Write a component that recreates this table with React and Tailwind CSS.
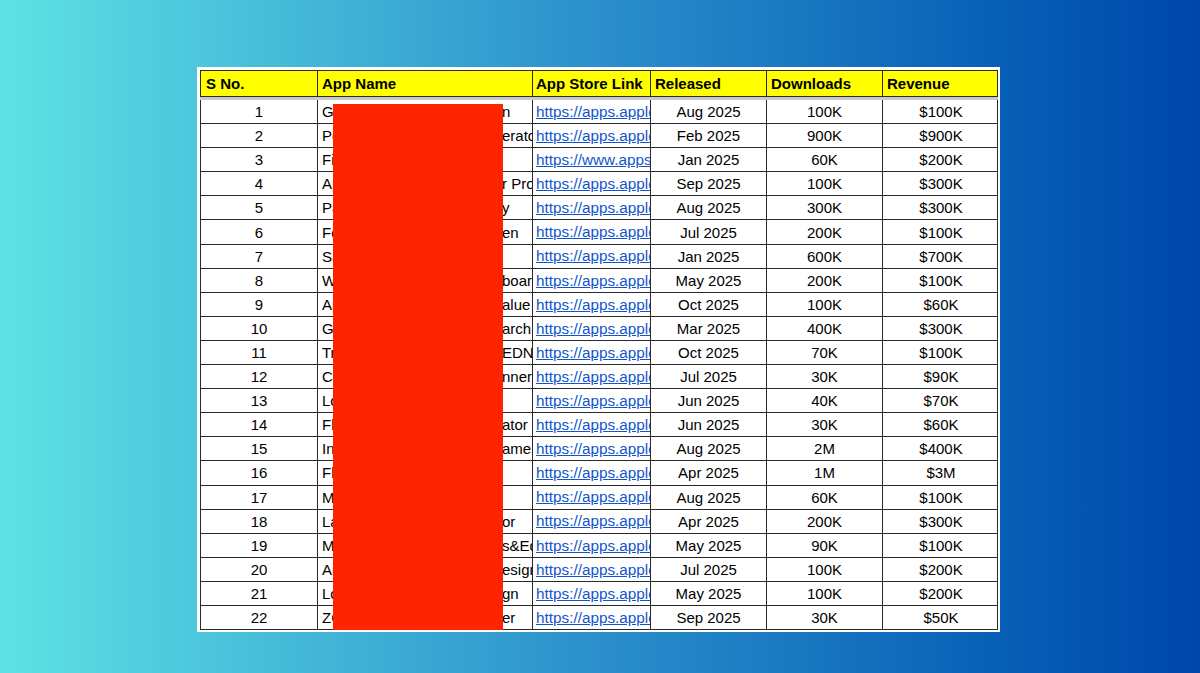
import React from "react";

const rows = [
  ["1", "Gr", "n", "https://apps.apple.com/app", "Aug 2025", "100K", "$100K"],
  ["2", "Po", "erato", "https://apps.apple.com/app", "Feb 2025", "900K", "$900K"],
  ["3", "Fi", "", "https://www.appstore.com/app", "Jan 2025", "60K", "$200K"],
  ["4", "Ap", "r Pro", "https://apps.apple.com/app", "Sep 2025", "100K", "$300K"],
  ["5", "Pa", "y", "https://apps.apple.com/app", "Aug 2025", "300K", "$300K"],
  ["6", "Fo", "en", "https://apps.apple.com/app", "Jul 2025", "200K", "$100K"],
  ["7", "Sa", "", "https://apps.apple.com/app", "Jan 2025", "600K", "$700K"],
  ["8", "Wo", "board", "https://apps.apple.com/app", "May 2025", "200K", "$100K"],
  ["9", "Ap", "alue", "https://apps.apple.com/app", "Oct 2025", "100K", "$60K"],
  ["10", "Go", "arch", "https://apps.apple.com/app", "Mar 2025", "400K", "$300K"],
  ["11", "Tr", "EDN", "https://apps.apple.com/app", "Oct 2025", "70K", "$100K"],
  ["12", "Co", "nner", "https://apps.apple.com/app", "Jul 2025", "30K", "$90K"],
  ["13", "Lo", "", "https://apps.apple.com/app", "Jun 2025", "40K", "$70K"],
  ["14", "Fl", "ator", "https://apps.apple.com/app", "Jun 2025", "30K", "$60K"],
  ["15", "In", "ames", "https://apps.apple.com/app", "Aug 2025", "2M", "$400K"],
  ["16", "Fl", "", "https://apps.apple.com/app", "Apr 2025", "1M", "$3M"],
  ["17", "Ma", "", "https://apps.apple.com/app", "Aug 2025", "60K", "$100K"],
  ["18", "La", "or", "https://apps.apple.com/app", "Apr 2025", "200K", "$300K"],
  ["19", "Mo", "s&Ed", "https://apps.apple.com/app", "May 2025", "90K", "$100K"],
  ["20", "Ai", "esign", "https://apps.apple.com/app", "Jul 2025", "100K", "$200K"],
  ["21", "Lo", "gn", "https://apps.apple.com/app", "May 2025", "100K", "$200K"],
  ["22", "ZC", "er", "https://apps.apple.com/app", "Sep 2025", "30K", "$50K"],
];

const cols = "grid grid-cols-[117px_215px_118px_116px_116px_116px]";

export default function App() {
  return (
    <div className="w-[1200px] h-[673px] overflow-hidden bg-linear-to-r from-[#5fe2e4] via-[#2b8fcb] to-[#0046ab] pt-[67px] pl-[197px] font-['Liberation_Sans',Arial,sans-serif] text-black">
      <div className="relative w-[803px] bg-white pt-[3px] pl-[3px] pr-[2px] pb-[2px]">
        <div className={`${cols} h-[27px] bg-[#ffff00] border border-[#2a2a2a] text-[15px] font-bold leading-none`}>
          <div className="flex items-center pl-[5px] border-r border-[#2a2a2a]">S No.</div>
          <div className="flex items-center pl-[4px] border-r border-[#2a2a2a]">App Name</div>
          <div className="flex items-center pl-[3px] border-r border-[#2a2a2a] whitespace-nowrap">App Store Link</div>
          <div className="flex items-center pl-[4px] border-r border-[#2a2a2a]">Released</div>
          <div className="flex items-center pl-[4px] border-r border-[#2a2a2a]">Downloads</div>
          <div className="flex items-center pl-[4px]">Revenue</div>
        </div>
        <div className="h-[3px] bg-[#c9c9c9]" />
        <div className="border-l border-r border-[#2a2a2a] text-[15px] leading-none">
          {rows.map((r) => (
            <div key={r[0]} className={`${cols} h-[24.1px] border-b border-[#2a2a2a]`}>
              <div className="flex items-center justify-center border-r border-[#2a2a2a]">{r[0]}</div>
              <div className="flex items-center overflow-hidden whitespace-nowrap border-r border-[#2a2a2a]">
                <span className="w-[184px] shrink-0 pl-[4px]">{r[1]}</span>
                <span>{r[2]}</span>
              </div>
              <div className="flex items-center overflow-hidden whitespace-nowrap pl-[3px] border-r border-[#2a2a2a]">
                <span className="text-[#1155cc] underline text-[15.3px]">{r[3]}</span>
              </div>
              <div className="flex items-center justify-center border-r border-[#2a2a2a]">{r[4]}</div>
              <div className="flex items-center justify-center border-r border-[#2a2a2a]">{r[5]}</div>
              <div className="flex items-center justify-center">{r[6]}</div>
            </div>
          ))}
        </div>
        <div className="absolute left-[136px] top-[37px] w-[170px] h-[526px] bg-[#ff2400]" />
      </div>
    </div>
  );
}
